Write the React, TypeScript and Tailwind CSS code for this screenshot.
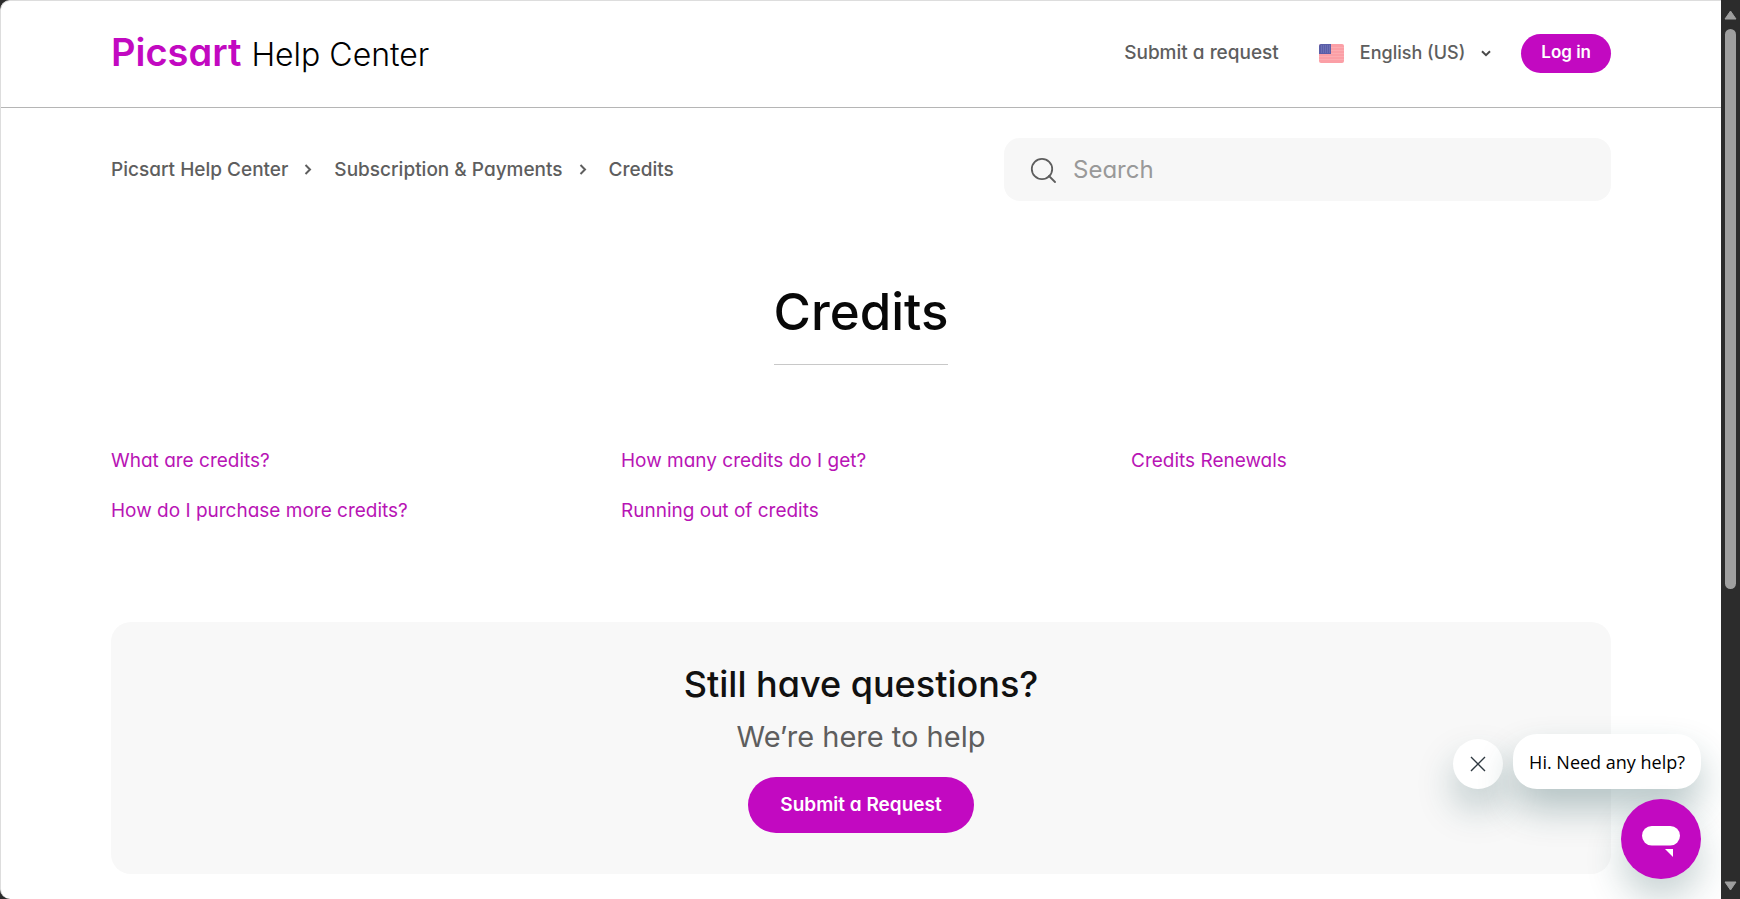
import React from 'react';

interface Article {
  title: string;
  href: string;
}

const breadcrumbs = ['Picsart Help Center', 'Subscription & Payments', 'Credits'];

const articles: Article[] = [
  { title: 'What are credits?', href: '#what-are-credits' },
  { title: 'How many credits do I get?', href: '#how-many-credits' },
  { title: 'Credits Renewals', href: '#credits-renewals' },
  { title: 'How do I purchase more credits?', href: '#purchase-credits' },
  { title: 'Running out of credits', href: '#running-out' },
];

const UsFlag = () => (
  <svg width="25" height="19" viewBox="0 0 25 19" aria-hidden="true">
    <rect width="25" height="19" rx="2" fill="#fb9fa6" />
    {[3, 6, 9, 12, 15].map((y) => (
      <rect key={y} y={y} width="25" height="1" fill="#fcacb1" />
    ))}
    <path d="M2 0h10v10H0V2a2 2 0 0 1 2-2z" fill="#5a5ea8" />
    {[2, 4, 6, 8].map((y) => (
      <path key={y} d={`M2 ${y}h9`} stroke="#8a8dc6" strokeWidth="0.8" strokeDasharray="1 1" />
    ))}
  </svg>
);

const Header = () => (
  <header className="border-b border-[#b5b5b5]">
    <div className="mx-auto flex h-[106px] max-w-[1500px] items-center justify-between pb-0.5">
      <a href="#home" className="flex items-baseline gap-2.5">
        <span className="text-[38px] leading-[48px] font-semibold text-[#c209c1]">Picsart</span>
        <span className="text-[32px] leading-[48px] font-light text-black">Help Center</span>
      </a>
      <nav className="flex items-center font-medium text-[#5e5e5e]">
        <a href="#request" className="text-[19px] leading-8">Submit a request</a>
        <button type="button" className="ml-10 flex items-center text-lg">
          <UsFlag />
          <span className="ml-4">English (US)</span>
          <svg className="ml-4" width="10" height="7" viewBox="0 0 10 7" fill="none" aria-hidden="true">
            <path d="M1 1.2l4 4 4-4" stroke="#4a4a4a" strokeWidth="2" />
          </svg>
        </button>
        <button type="button" className="ml-[30px] h-[39px] rounded-full bg-[#c209c1] px-5 text-[17px] font-semibold text-white">
          Log in
        </button>
      </nav>
    </div>
  </header>
);

const SubNav = () => (
  <div className="flex items-center justify-between pt-[30px]">
    <nav aria-label="Breadcrumb">
      <ol className="flex items-center text-[19px] leading-8 font-medium text-[#5e5e5e]">
        {breadcrumbs.map((crumb, i) => (
          <li key={crumb} className="flex items-center">
            {i > 0 && (
              <svg className="mr-[22px] ml-4" width="8" height="11" viewBox="0 0 8 11" fill="none" aria-hidden="true">
                <path d="M1.5 1l4.5 4.5-4.5 4.5" stroke="#5e5e5e" strokeWidth="2" />
              </svg>
            )}
            <a href="#crumb">{crumb}</a>
          </li>
        ))}
      </ol>
    </nav>
    <label className="flex h-[63px] w-[607px] items-center rounded-2xl bg-[#f7f7f7] pl-[26px]">
      <svg width="27" height="27" viewBox="0 0 27 27" fill="none" aria-hidden="true">
        <circle cx="12" cy="13" r="10.2" stroke="#5e5e5e" strokeWidth="1.8" />
        <path d="M19 20l6 6" stroke="#5e5e5e" strokeWidth="1.8" strokeLinecap="round" />
      </svg>
      <input
        type="search"
        aria-label="Search"
        placeholder="Search"
        className="ml-4 min-w-0 flex-1 bg-transparent text-2xl text-[#5e5e5e] outline-none placeholder:text-[#999999]"
      />
    </label>
  </div>
);

const ContactCard = () => (
  <section className="mt-[86px] flex flex-col items-center rounded-[20px] bg-[#f8f8f8] pt-10 pb-[41px]">
    <h2 className="text-4xl leading-[44px] font-medium text-[#111111]">Still have questions?</h2>
    <p className="mt-[13px] text-[29px] leading-9 text-[#5e5e5e]">We’re here to help</p>
    <button type="button" className="mt-[22px] h-14 rounded-full bg-[#c209c1] px-8 text-[19px] font-semibold text-white">
      Submit a Request
    </button>
  </section>
);

const ChatWidget = () => (
  <div className="absolute right-5 bottom-5 flex flex-col items-end gap-2.5">
    <div className="flex items-end gap-2.5">
      <button
        type="button"
        aria-label="Close message"
        className="flex h-[50px] w-[50px] items-center justify-center rounded-full bg-white shadow-[0_20px_36px_rgba(23,73,77,0.26)]"
      >
        <svg width="16" height="16" viewBox="0 0 16 16" fill="none" aria-hidden="true">
          <path d="M1 1l14 14M15 1L1 15" stroke="#2f3941" strokeWidth="1.4" />
        </svg>
      </button>
      <button
        type="button"
        className="h-[55px] rounded-3xl bg-white px-4 font-['Open_Sans',sans-serif] text-lg text-black shadow-[0_20px_36px_rgba(23,73,77,0.3)]"
      >
        Hi. Need any help?
      </button>
    </div>
    <button
      type="button"
      aria-label="Open messaging window"
      className="flex h-20 w-20 items-center justify-center rounded-full bg-[#c209c1] pt-1 shadow-[0_20px_36px_rgba(23,73,77,0.24)]"
    >
      <svg width="38" height="31" viewBox="0 0 38 31" fill="white" aria-hidden="true">
        <rect width="38" height="19.5" rx="9.75" />
        <path d="M23 23h8v8z" />
      </svg>
    </button>
  </div>
);

const Scrollbar = () => (
  <div className="flex w-[19px] shrink-0 flex-col items-center" aria-hidden="true">
    <svg className="mt-2.5" width="13" height="10" viewBox="0 0 13 10">
      <path d="M6.5 1L12 9H1z" fill="#9f9f9f" stroke="#9f9f9f" strokeLinejoin="round" />
    </svg>
    <div className="mt-[9px] w-[11px] flex-[559] rounded-full bg-[#9f9f9f]" />
    <div className="flex-[291]" />
    <svg className="mb-2" width="13" height="10" viewBox="0 0 13 10">
      <path d="M6.5 9L12 1H1z" fill="#9f9f9f" stroke="#9f9f9f" strokeLinejoin="round" />
    </svg>
  </div>
);

export default function App() {
  return (
    <div className="flex h-screen bg-[#2c2c2c] font-['Inter',sans-serif] [font-feature-settings:'cv11']">
      <div className="relative min-w-0 flex-1 overflow-hidden rounded-l-[10px] border-t border-l border-[#dddddd] bg-white">
        <Header />
        <main className="mx-auto max-w-[1500px]">
          <SubNav />
          <div className="mt-[81px] flex justify-center">
            <h1 className="border-b border-[#c8c8c8] pb-[22px] text-[51px] leading-[60px] font-medium text-[#080808]">
              Credits
            </h1>
          </div>
          <ul className="mt-[71px] grid grid-cols-3 gap-x-[30px] text-[19px] leading-[50px] text-[#b814b5]">
            {articles.map((article) => (
              <li key={article.title}>
                <a href={article.href}>{article.title}</a>
              </li>
            ))}
          </ul>
          <ContactCard />
        </main>
        <ChatWidget />
      </div>
      <Scrollbar />
    </div>
  );
}
